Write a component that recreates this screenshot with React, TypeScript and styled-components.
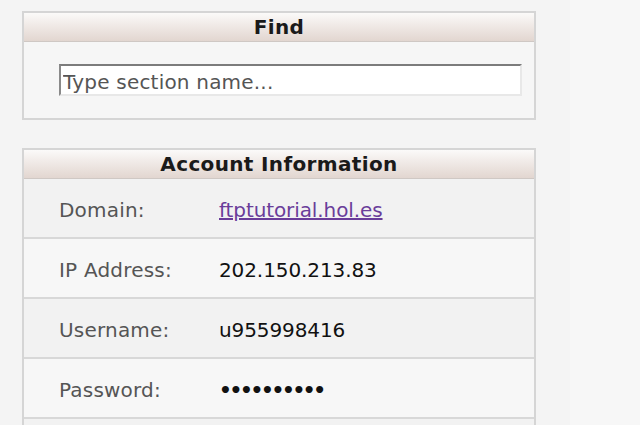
import React from "react";
import styled, { createGlobalStyle } from "styled-components";

const Global = createGlobalStyle`
  html, body { margin: 0; padding: 0; }
  body {
    background: #f7f7f7;
    font-family: "DejaVu Sans", Verdana, sans-serif;
    width: 640px;
    height: 425px;
    overflow: hidden;
  }
`;

const Page = styled.div`
  display: flex;
  height: 425px;
  overflow: hidden;
`;

const Sidebar = styled.div`
  width: 570px;
  height: 425px;
  overflow: hidden;
  background: #f4f4f4;
  padding: 11px 0 0 22px;
  box-sizing: border-box;
  display: flex;
  flex-direction: column;
  gap: 28px;
`;

const Panel = styled.section`
  width: 514px;
  flex-shrink: 0;
  box-sizing: border-box;
  border: 2px solid #d5d5d5;
  background: #f6f6f6;
`;

const PanelHeader = styled.h2`
  margin: 0;
  height: 29px;
  box-sizing: border-box;
  border-bottom: 1px solid #cfc8c4;
  background: linear-gradient(to bottom, #fbfaf9 0%, #f1ebe8 40%, #e2d6d0 100%);
  font-size: 20px;
  font-weight: bold;
  letter-spacing: 0.35px;
  color: #1a1a1a;
  text-align: center;
  line-height: 29px;
`;

const FindBody = styled.div`
  padding: 22px 13px 22px 35px;
`;

const SearchInput = styled.input`
  display: block;
  width: 463px;
  height: 32px;
  box-sizing: border-box;
  border-style: solid;
  border-width: 2px;
  border-color: #7c7c7c #e8e8e8 #e8e8e8 #8a8a8a;
  background: #ffffff;
  padding: 3px 2px 0;
  font-family: "DejaVu Sans", Verdana, sans-serif;
  font-size: 20px;
  letter-spacing: 0.2px;
  color: #555;
  outline: none;
  &::placeholder { color: #555; }
`;

const Row = styled.div<{ $alt?: boolean }>`
  display: flex;
  align-items: center;
  height: 60px;
  box-sizing: border-box;
  padding: 4px 0 0 35px;
  border-bottom: 2px solid #d8d8d8;
  background: ${(p) => (p.$alt ? "#f2f2f2" : "#f7f7f7")};
  font-size: 20px;
`;

const Label = styled.span`
  width: 160px;
  color: #555;
  letter-spacing: 0.2px;
`;

const Value = styled.span`
  color: #111;
  letter-spacing: -0.1px;
`;

const DomainLink = styled.a`
  color: #6a3d9a;
  text-decoration: underline;
  letter-spacing: -0.1px;
`;

const Dots = styled.span`
  color: #111;
  font-weight: bold;
  letter-spacing: -2.3px;
`;

export default function App() {
  return (
    <>
      <Global />
      <Page>
        <Sidebar>
          <Panel>
            <PanelHeader>Find</PanelHeader>
            <FindBody>
              <SearchInput placeholder="Type section name..." />
            </FindBody>
          </Panel>
          <Panel>
            <PanelHeader>Account Information</PanelHeader>
            <Row $alt>
              <Label>Domain:</Label>
              <DomainLink href="#">ftptutorial.hol.es</DomainLink>
            </Row>
            <Row>
              <Label>IP Address:</Label>
              <Value>202.150.213.83</Value>
            </Row>
            <Row $alt>
              <Label>Username:</Label>
              <Value>u955998416</Value>
            </Row>
            <Row>
              <Label>Password:</Label>
              <Dots>••••••••••</Dots>
            </Row>
            <Row $alt>
              <Label></Label>
            </Row>
          </Panel>
        </Sidebar>
      </Page>
    </>
  );
}
